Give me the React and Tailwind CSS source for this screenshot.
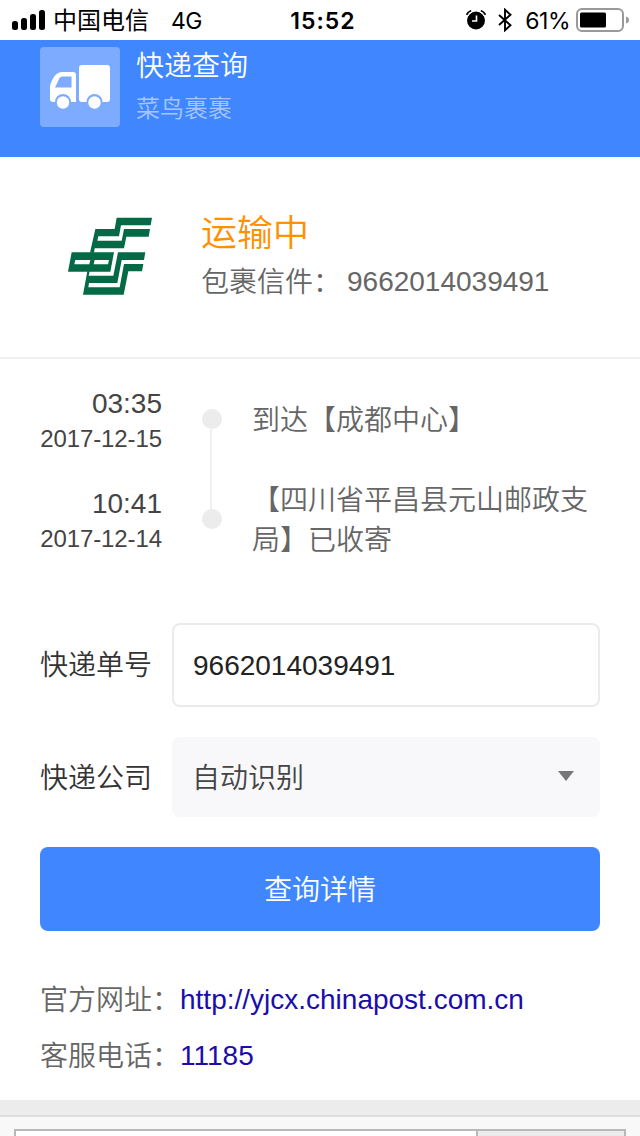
import React, { useState } from 'react';

const events = [
  { time: '03:35', date: '2017-12-15', text: '到达【成都中心】' },
  { time: '10:41', date: '2017-12-14', text: '【四川省平昌县元山邮政支局】已收寄' }
];

function StatusBar() {
  return (
    <div className="h-10 shrink-0 flex items-center justify-between pl-3 pr-[11px] text-black">
      <div className="flex-1 flex items-center">
        <svg className="w-[33px] h-5" viewBox="0 0 33 20">
          <rect x="0" y="11" width="6" height="9" rx="2.5" />
          <rect x="9" y="8" width="6" height="12" rx="2.5" />
          <rect x="18" y="4" width="6" height="16" rx="2.5" />
          <rect x="27" y="0" width="6" height="20" rx="2.5" />
        </svg>
        <span className="ml-2 mt-0.5 text-2xl leading-10 font-normal">中国电信</span>
        <span className="ml-[22px] mt-0.5 font-['Inter'] font-normal text-[23px] leading-10 tracking-[-0.5px]">4G</span>
      </div>
      <span className="mt-0.5 ml-[5px] font-['Inter'] font-semibold text-[23px] leading-10 tracking-[1px]">15:52</span>
      <div className="flex-1 flex items-center justify-end">
        {/* Alarm */}
        <svg className="w-5 h-5" viewBox="0 0 20 20" fill="none">
          <circle cx="10" cy="10.5" r="9" fill="#000" />
          <path d="M10.5 5.5v5.5H6" stroke="#fff" strokeWidth="1.6" />
          <path d="M1 4.2Q2 1.8 4.5 1M19 4.2Q18 1.8 15.5 1" stroke="#000" strokeWidth="1.8" strokeLinecap="round" />
          <path d="M2 5.8Q3.5 3.2 5.8 1.9M18 5.8Q16.5 3.2 14.2 1.9" stroke="#fff" strokeWidth="0.9" />
        </svg>
        {/* Bluetooth */}
        <svg className="ml-3 w-3.5 h-6" viewBox="0 0 14 24" fill="none">
          <path d="M1 7L12.5 17.2L7 22.3V1.7L12.5 6.8L1 17" stroke="#000" strokeWidth="1.9" />
        </svg>
        <span className="ml-[13px] mt-0.5 font-['Inter'] font-normal text-[23px] leading-10 tracking-[-0.5px]">61%</span>
        <svg className="ml-1.5 w-[53px] h-6" viewBox="0 0 53 24">
          <rect x="1" y="1" width="46" height="22" rx="5" fill="#fff" stroke="#999" strokeWidth="2" />
          <rect x="4" y="4.5" width="26" height="15" rx="1.5" />
          <path d="M50 8.5q3 1 3 3.5t-3 3.5z" fill="#999" />
        </svg>
      </div>
    </div>
  );
}

function PostLogo() {
  return (
    <svg className="w-[86px] h-20 shrink-0" viewBox="54 51 258 240" fill="#046a45">
      <path d="M200 53H306L302 76H213L207 109H145L142 122H215L222 87H300L296 110H229L222 145H134L132 158H120L136 87H194Z" />
      <path fillRule="evenodd" d="M65 157H192L181 215H54ZM76 180L73 193H118L121 180ZM134 180L131 193H174L177 180Z" />
      <path d="M204 157H286L282 180H215L202 249H117L115 262H209L222 192H280L276 214H235L221 284H99L112 214H119L116 227H190Z" />
    </svg>
  );
}

export default function App() {
  const [number, setNumber] = useState('9662014039491');

  return (
    <div className="w-[640px] h-[1136px] overflow-hidden flex flex-col bg-white font-[350] font-['Liberation_Sans','Noto_Sans_CJK_SC',sans-serif]">
      <StatusBar />

      {/* Header */}
      <header className="h-[117px] shrink-0 bg-[#4087ff] px-10 pt-[7px] flex items-start">
        <div className="w-20 h-20 rounded-[4px] bg-[#7dabff] flex items-center justify-center">
          <svg className="w-[60px] h-11" viewBox="0 0 60 44" fill="#fff">
            <path d="M32 0H57Q60 0 60 3V34Q60 37 57 37H52.5A8 8 0 0 0 36.5 37H32Q29 37 29 34V3Q29 0 32 0Z" />
            <path fillRule="evenodd" d="M12 7H23Q26 7 26 10V37H21A8 8 0 0 0 5 37H3Q0 37 0 34V21Q4 7 12 7ZM12 11.5Q10.5 11.5 9.5 13L5 22.5H21.5V11.5Z" />
            <circle cx="13" cy="37.5" r="6.2" />
            <circle cx="44.5" cy="37.5" r="6.2" />
          </svg>
        </div>
        <div className="ml-4">
          <h1 className="text-[28px] leading-10 text-white">快递查询</h1>
          <p className="mt-1 text-2xl leading-9 text-[#a6c6ff]">菜鸟裹裹</p>
        </div>
      </header>

      {/* Current state */}
      <section className="h-[202px] shrink-0 flex items-center pl-[68px] border-b-2 border-[#f0f0f0]">
        <PostLogo />
        <div className="ml-[47px]">
          <h2 className="text-4xl leading-[50px] text-[#ff9000]">运输中</h2>
          <div className="flex text-[28px] leading-[46px] text-[#666]">
            <span className="w-[146px] pt-px">包裹信件：</span>
            <span>{number}</span>
          </div>
        </div>
      </section>

      {/* Timeline */}
      <ul className="h-[264px] shrink-0 pt-[27px] px-10">
        {events.map((e, i) => (
          <li key={e.date} className="h-[100px] flex">
            <div className="w-[122px] text-right text-[#444]">
              <div className="text-[28px] leading-9">{e.time}</div>
              <div className="text-[24px] leading-[34px] tracking-[-0.1px]">{e.date}</div>
            </div>
            <div className="ml-10 w-5 pt-[23px] flex flex-col items-center">
              <span className="w-5 h-5 shrink-0 rounded-full bg-[#ececec]" />
              {i < events.length - 1 && <span className="mr-0.5 w-0.5 h-20 shrink-0 bg-[#f0f0f0]" />}
            </div>
            <p className={`ml-[30px] w-[348px] text-[28px] leading-10 text-[#666] ${i === 0 ? 'pt-[15px]' : '-mt-[5px]'}`}>
              {e.text}
            </p>
          </li>
        ))}
      </ul>

      {/* Query form */}
      <form className="px-10 shrink-0 text-[28px] text-[#333]" onSubmit={e => e.preventDefault()}>
        <label className="flex items-center h-[84px]">
          <span className="w-[132px] shrink-0 pt-0.5">快递单号</span>
          <input
            className="w-[428px] h-[84px] rounded-lg border-2 border-[#ebebeb] px-[19px] pt-0.5 text-[28px] text-[#222] outline-none"
            value={number}
            onChange={e => setNumber(e.target.value)}
          />
        </label>
        <div className="mt-[30px] flex items-center h-20">
          <span className="w-[132px] shrink-0 pt-1">快递公司</span>
          <button type="button" className="w-[428px] h-20 rounded-lg bg-[#f8f8fb] pl-5 pr-[26px] flex items-center justify-between text-[#444]">
            <span className="pt-1">自动识别</span>
            <svg className="w-4 h-2.5 -mt-0.5" viewBox="0 0 16 10" fill="#777">
              <path d="M0 0H16L8 10Z" />
            </svg>
          </button>
        </div>
        <button type="submit" className="mt-[30px] w-full h-[84px] rounded-lg bg-[#4087ff] pt-1 text-white">查询详情</button>
      </form>

      {/* Contact */}
      <div className="h-[169px] shrink-0 pt-[41px] px-10 text-[28px] leading-[56px] text-[#666]">
        <div className="flex h-14">
          <span className="w-[140px] pt-px">官方网址：</span>
          <a href="http://yjcx.chinapost.com.cn" className="text-[#1a0dab]">http://yjcx.chinapost.com.cn</a>
        </div>
        <div className="flex h-14">
          <span className="w-[140px] pt-px">客服电话：</span>
          <a href="tel:11185" className="text-[#1a0dab]">11185</a>
        </div>
      </div>

      {/* Bottom search bar */}
      <div className="h-[17px] shrink-0 bg-[#ececec] border-b-2 border-[#dedede]" />
      <div className="flex-1 bg-[#f8f8f8] px-3.5 pt-3">
        <div className="h-16 flex border-2 border-[#b8b8b8]">
          <div className="flex-1 bg-white" />
          <div className="w-[148px] border-l-2 border-[#b8b8b8] bg-[#ebebeb]" />
        </div>
      </div>
    </div>
  );
}
